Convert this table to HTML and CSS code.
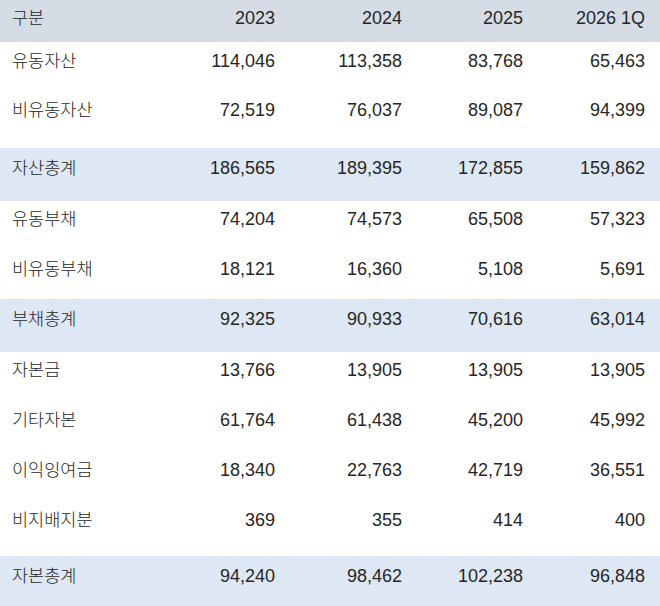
FILE: index.html
```html
<!DOCTYPE html>
<html lang="ko">
<head>
<meta charset="utf-8">
<title>재무상태표</title>
<link rel="stylesheet" href="styles.css">
</head>
<body>
<div class="table">
  <div class="row head"><div class="label">구분</div><div class="num">2023</div><div class="num">2024</div><div class="num">2025</div><div class="num">2026 1Q</div></div>
  <div class="row"><div class="label">유동자산</div><div class="num">114,046</div><div class="num">113,358</div><div class="num">83,768</div><div class="num">65,463</div></div>
  <div class="row"><div class="label">비유동자산</div><div class="num">72,519</div><div class="num">76,037</div><div class="num">89,087</div><div class="num">94,399</div></div>
  <div class="row total"><div class="label">자산총계</div><div class="num">186,565</div><div class="num">189,395</div><div class="num">172,855</div><div class="num">159,862</div></div>
  <div class="row"><div class="label">유동부채</div><div class="num">74,204</div><div class="num">74,573</div><div class="num">65,508</div><div class="num">57,323</div></div>
  <div class="row"><div class="label">비유동부채</div><div class="num">18,121</div><div class="num">16,360</div><div class="num">5,108</div><div class="num">5,691</div></div>
  <div class="row total"><div class="label">부채총계</div><div class="num">92,325</div><div class="num">90,933</div><div class="num">70,616</div><div class="num">63,014</div></div>
  <div class="row"><div class="label">자본금</div><div class="num">13,766</div><div class="num">13,905</div><div class="num">13,905</div><div class="num">13,905</div></div>
  <div class="row"><div class="label">기타자본</div><div class="num">61,764</div><div class="num">61,438</div><div class="num">45,200</div><div class="num">45,992</div></div>
  <div class="row"><div class="label">이익잉여금</div><div class="num">18,340</div><div class="num">22,763</div><div class="num">42,719</div><div class="num">36,551</div></div>
  <div class="row"><div class="label">비지배지분</div><div class="num">369</div><div class="num">355</div><div class="num">414</div><div class="num">400</div></div>
  <div class="row total"><div class="label">자본총계</div><div class="num">94,240</div><div class="num">98,462</div><div class="num">102,238</div><div class="num">96,848</div></div>
</div>
</body>
</html>
```
FILE: styles.css
```css
html, body {
  margin: 0;
  padding: 0;
  background: #ffffff;
}
body {
  width: 660px;
  color: #262626;
  font-family: "Liberation Sans", "Noto Sans CJK KR", sans-serif;
}
.table {
  display: grid;
  grid-template-columns: 660px;
  grid-template-rows: 42px 49px 57px 53px 49px 49px 53px 49px 50px 50px 55px 50px;
}
.row {
  display: grid;
  grid-template-columns: 163px 127px 127px 121px 122px;
  align-items: baseline;
  align-content: start;
  padding-top: 6px;
  box-sizing: border-box;
}
.head {
  background: #d6dce6;
  padding-top: 5px;
}
.total {
  background: #dde8f4;
  padding-top: 7px;
}
.total + .row {
  padding-top: 5px;
}
.label {
  padding-left: 12px;
  font-family: "Noto Sans CJK KR", sans-serif;
  font-size: 17.5px;
  font-weight: 300;
  line-height: 24px;
  white-space: nowrap;
}
.num {
  padding-right: 15px;
  text-align: right;
  font-size: 18px;
  line-height: 24px;
  white-space: nowrap;
}
```
